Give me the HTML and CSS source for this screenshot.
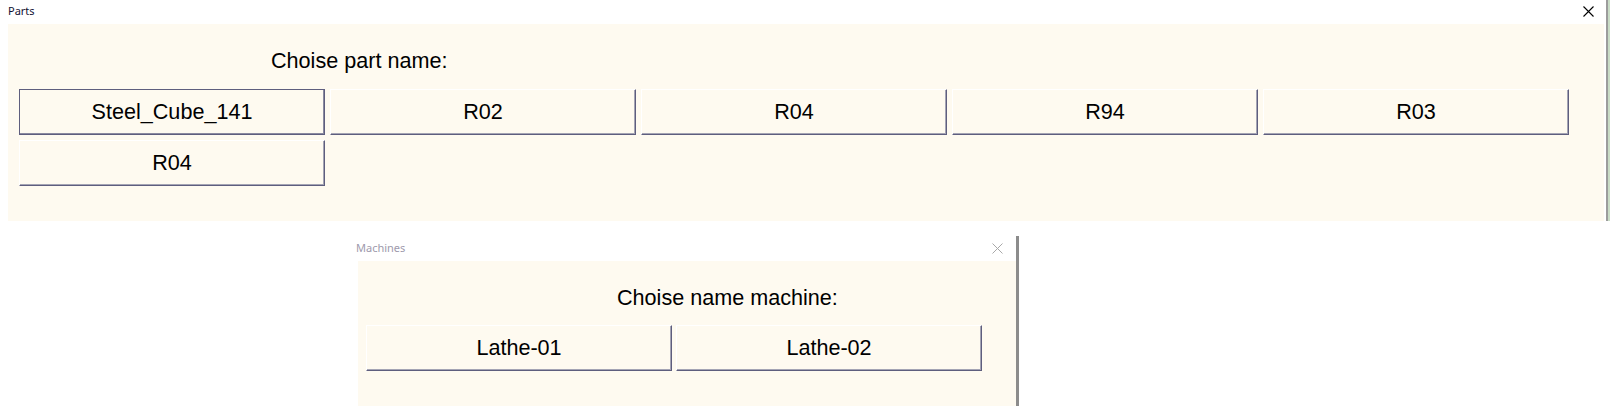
FILE: index.html
```html
<!DOCTYPE html>
<html>
<head>
<meta charset="utf-8">
<link rel="stylesheet" href="styles.css">
</head>
<body>
<div class="win parts">
  <div class="titlebar">
    <span class="title">Parts</span>
    <svg class="close" width="11" height="11" viewBox="0 0 11 11"><path d="M0.5 0.5L10.5 10.5M10.5 0.5L0.5 10.5" stroke="#000" stroke-width="1.1" fill="none"/></svg>
  </div>
  <div class="panel parts-panel">
    <div class="label parts-label">Choise part name:</div>
    <div class="grid parts-grid">
      <div class="btn selected">Steel_Cube_141</div>
      <div class="btn">R02</div>
      <div class="btn">R04</div>
      <div class="btn">R94</div>
      <div class="btn">R03</div>
      <div class="btn">R04</div>
    </div>
  </div>
</div>
<div class="win machines">
  <div class="titlebar">
    <span class="title inactive">Machines</span>
    <svg class="close" width="11" height="11" viewBox="0 0 11 11"><path d="M0.5 0.5L10.5 10.5M10.5 0.5L0.5 10.5" stroke="#a8a8a8" stroke-width="1" fill="none"/></svg>
  </div>
  <div class="panel machines-panel">
    <div class="label machines-label">Choise name machine:</div>
    <div class="grid machines-grid">
      <div class="btn">Lathe-01</div>
      <div class="btn">Lathe-02</div>
    </div>
  </div>
</div>
</body>
</html>
```
FILE: styles.css
```css
html, body {
  margin: 0;
  padding: 0;
  background: #ffffff;
  width: 1612px;
  height: 406px;
  overflow: hidden;
  font-family: "Liberation Sans", Arial, sans-serif;
}

.win {
  display: flex;
  flex-direction: column;
  box-sizing: border-box;
}

.parts {
  width: 1608px;
  border-right: 2px solid #9c9c9c;
  box-shadow: 2px 0 0 #c9dcc6;
  margin-top: 0;
}

.titlebar {
  display: flex;
  align-items: center;
  justify-content: space-between;
  box-sizing: border-box;
}

.parts .titlebar {
  height: 24px;
  padding: 0 12px 0 8px;
}

.title {
  font-family: "Noto Sans", "Open Sans", sans-serif;
  font-size: 11px;
  color: #111133;
  position: relative;
  top: -2px;
}

.title.inactive {
  color: #9e9aac;
  font-size: 11px;
}

.parts .close {
  position: relative;
  top: -1px;
}

.panel {
  background: #fefaf0;
  box-sizing: border-box;
}

.parts-panel {
  margin-left: 8px;
  width: 1596px;
  height: 197px;
  padding: 25px 0 0 11px;
}

.label {
  font-size: 21.6px;
  color: #000;
  line-height: 24px;
}

.parts-label {
  margin-left: 252px;
}

.grid {
  display: grid;
  grid-template-columns: repeat(5, 306px);
  gap: 5px;
  margin-top: 16px;
}

.machines-grid {
  grid-template-columns: repeat(2, 306px);
  gap: 4px;
  margin-top: 15px;
}

.btn {
  height: 46px;
  box-sizing: border-box;
  display: flex;
  align-items: center;
  justify-content: center;
  font-size: 21.6px;
  color: #000;
  background: #fefaf0;
  border-top: 1px solid #ffffff;
  border-left: 1px solid #ffffff;
  border-right: 1px solid #5e5e7e;
  border-bottom: 1px solid #5e5e7e;
  box-shadow: inset -1px -1px 0 #a4a4b4;
}

.btn.selected {
  border: 1px solid #5e5e7e;
  box-shadow: inset -1px -1px 0 #8a8aa0;
}

.machines {
  margin-top: 15px;
  margin-left: 348px;
  width: 671px;
  border-right: 3px solid #8c8c8c;
}

.machines .titlebar {
  height: 25px;
  padding: 0 13px 0 8px;
}

.machines .title {
  top: -1px;
}

.machines-panel {
  margin-left: 10px;
  width: 658px;
  height: 145px;
  padding: 25px 0 0 8px;
}

.machines-label {
  margin-left: 251px;
}
```
